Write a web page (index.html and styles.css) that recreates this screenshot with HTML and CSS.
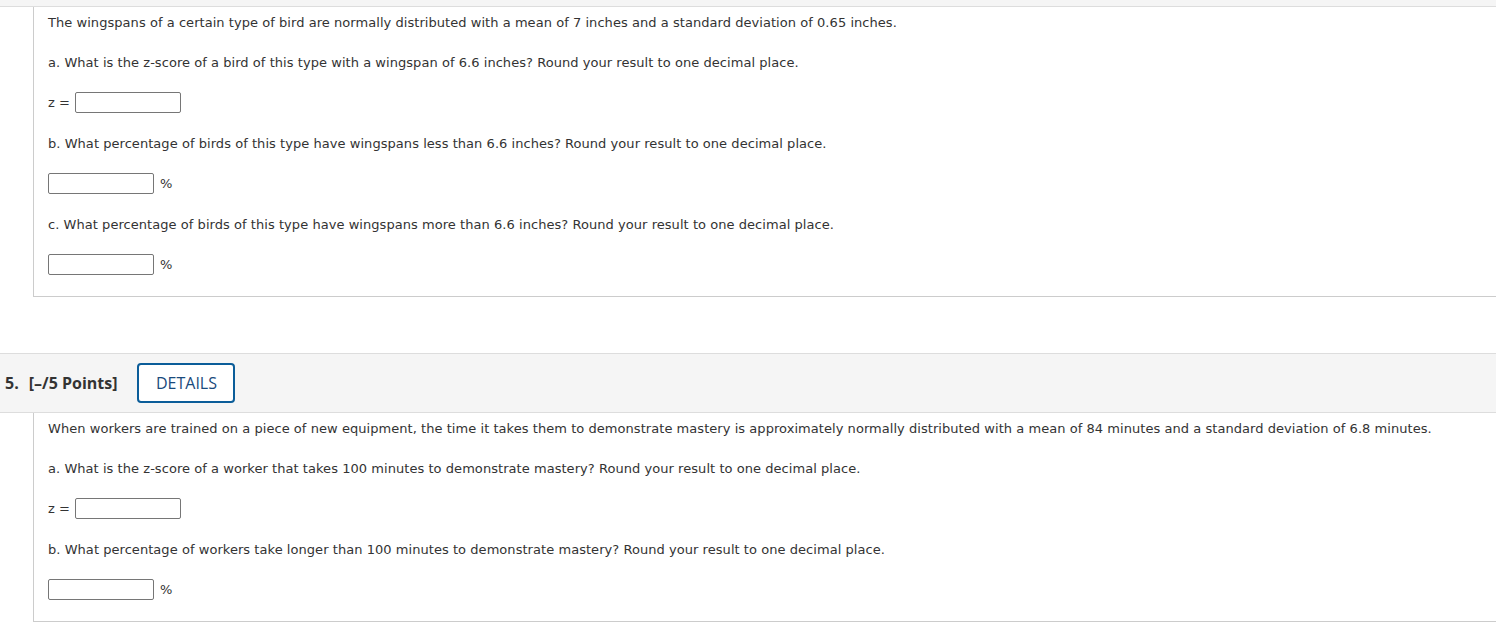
FILE: index.html
```html
<!DOCTYPE html>
<html>
<head>
<meta charset="utf-8">
<link rel="stylesheet" href="styles.css">
</head>
<body>
<div class="topbar"></div>
<div class="qbody">
  <div class="row">The wingspans of a certain type of bird are normally distributed with a mean of 7 inches and a standard deviation of 0.65 inches.</div>
  <div class="row">a. What is the z-score of a bird of this type with a wingspan of 6.6 inches? Round your result to one decimal place.</div>
  <div class="row inrow"><span class="zlabel">z =</span><span class="field"></span></div>
  <div class="row">b. What percentage of birds of this type have wingspans less than 6.6 inches? Round your result to one decimal place.</div>
  <div class="row inrow"><span class="field"></span><span class="pct">%</span></div>
  <div class="row">c. What percentage of birds of this type have wingspans more than 6.6 inches? Round your result to one decimal place.</div>
  <div class="row inrow"><span class="field"></span><span class="pct">%</span></div>
</div>

<div class="qhead">
  <span class="qnum">5.</span>
  <span class="qpts">[–/5 Points]</span>
  <button class="details">DETAILS</button>
</div>
<div class="qbody">
  <div class="row">When workers are trained on a piece of new equipment, the time it takes them to demonstrate mastery is approximately normally distributed with a mean of 84 minutes and a standard deviation of 6.8 minutes.</div>
  <div class="row">a. What is the z-score of a worker that takes 100 minutes to demonstrate mastery? Round your result to one decimal place.</div>
  <div class="row inrow"><span class="zlabel">z =</span><span class="field"></span></div>
  <div class="row">b. What percentage of workers take longer than 100 minutes to demonstrate mastery? Round your result to one decimal place.</div>
  <div class="row inrow"><span class="field"></span><span class="pct">%</span></div>
</div>
</body>
</html>
```
FILE: styles.css
```css
html, body {
  margin: 0;
  padding: 0;
  background: #fff;
}
body {
  font-family: "DejaVu Sans", Verdana, sans-serif;
  font-size: 13px;
  color: #333;
}
.topbar {
  height: 6px;
  background: #f5f5f5;
  border-bottom: 1px solid #ddd;
}
.qbody {
  margin-left: 33px;
  border-left: 1px solid #ccc;
  border-bottom: 1px solid #ccc;
  padding: 5px 0 21px 14px;
  display: flex;
  flex-direction: column;
  gap: 20px;
}
.row {
  height: 20px;
  line-height: 22px;
  white-space: nowrap;
  letter-spacing: 0.05px;
}
.inrow {
  height: 21px;
  display: flex;
  align-items: center;
}
.zlabel {
  margin-right: 5px;
}
.field {
  display: inline-block;
  box-sizing: border-box;
  width: 106px;
  height: 21px;
  border: 1px solid #767676;
  border-radius: 2px;
  background: #fff;
}
.pct {
  margin-left: 6px;
}
.qhead {
  margin-top: 56px;
  border-top: 1px solid #ddd;
  border-bottom: 1px solid #ddd;
  background: #f5f5f5;
  height: 58px;
  display: flex;
  align-items: center;
  padding-left: 5px;
  font-family: "Open Sans", sans-serif;
  font-size: 16px;
  font-weight: 700;
  color: #333;
}
.qnum {
  margin-right: 10px;
}
.details {
  margin-left: 20px;
  box-sizing: border-box;
  width: 98px;
  height: 40px;
  border: 2px solid #0b5d99;
  border-radius: 4px;
  background: #fff;
  font-family: "Open Sans", sans-serif;
  font-size: 16px;
  font-weight: 500;
  color: #1a4a7c;
  padding: 0;
}
```
